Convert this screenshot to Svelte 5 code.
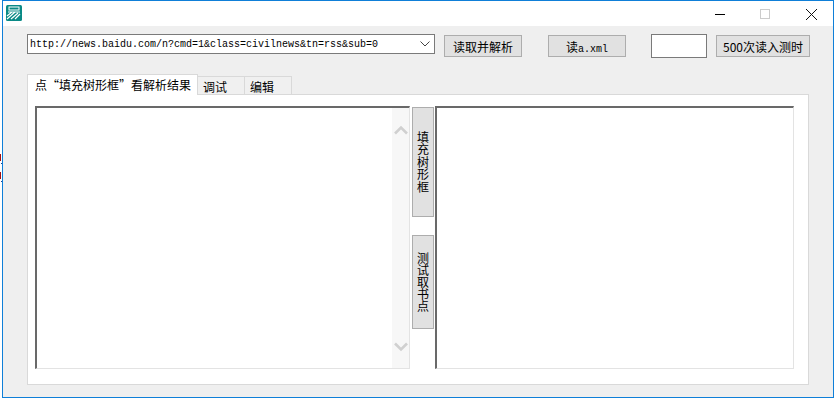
<script>
  let url = 'http://news.baidu.com/n?cmd=1&class=civilnews&tn=rss&sub=0';
  let tabs = ['点“填充树形框”看解析结果', '调试', '编辑'];
</script>

<div class="page">
  <div class="marks">
    <i class="red"></i><i class="dot"></i><i class="red second"></i><i class="dot"></i>
  </div>
  <div class="window">
    <div class="titlebar">
      <svg class="logo" width="16" height="16" viewBox="0 0 16 16">
        <rect width="16" height="16" rx="1.5" fill="#0a8a86" />
        <rect x="3" y="2" width="10" height="3" fill="none" stroke="#fff" stroke-width="1" />
        <path d="M1 11 L6 7 M1 14 L9 7 M5 14 L12 8 M9 14 L14 9 M2 7H14" stroke="#fff" stroke-width="1.2" fill="none" />
      </svg>
      <div class="controls">
        <svg width="103" height="12" viewBox="0 0 103 12">
          <path d="M0 6.5H10" stroke="#000" stroke-width="1" />
          <rect x="45.5" y="1.5" width="9" height="9" fill="none" stroke="#ccc" />
          <path d="M91 1 L102 12 M102 1 L91 12" stroke="#111" stroke-width="1" />
        </svg>
      </div>
    </div>

    <div class="client">
      <div class="toolbar">
        <div class="combo">
          <span class="url">{url}</span>
          <svg width="10" height="6" viewBox="0 0 10 6"><path d="M0.5 0.5 L5 5 L9.5 0.5" fill="none" stroke="#444" /></svg>
        </div>
        <button class="btn b1">读取并解析</button>
        <button class="btn b2">读<span class="mono">a.xml</span></button>
        <div class="edit"></div>
        <button class="btn b3">500次读入测时</button>
      </div>

      <div class="tabs">
        {#each tabs as tab, i}
          <div class="tab" class:active={i === 0}>{tab}</div>
        {/each}
      </div>

      <div class="panel">
        <div class="list left">
          <div class="scroll">
            <svg width="16" height="10" viewBox="0 0 16 10"><path d="M2 8.5 L8 2.5 L14 8.5" fill="none" stroke="#d0d0d0" stroke-width="2.6" /></svg>
            <svg width="16" height="10" viewBox="0 0 16 10"><path d="M2 1.5 L8 7.5 L14 1.5" fill="none" stroke="#d0d0d0" stroke-width="2.6" /></svg>
          </div>
        </div>
        <div class="side">
          <button class="vbtn first"><span>填充树形框</span></button>
          <button class="vbtn second"><span>测试取书点</span></button>
        </div>
        <div class="list right"></div>
      </div>
    </div>
  </div>
</div>

<style>
  :global(body) {
    margin: 0;
    background: #fff;
  }
  .page {
    display: flex;
    width: 837px;
    height: 400px;
    position: relative;
    font-family: "Noto Sans CJK SC", "Liberation Sans", sans-serif;
    font-size: 12px;
    color: #000;
  }
  .marks {
    position: absolute;
    left: 0;
    top: 154px;
    width: 2px;
  }
  .marks i {
    display: block;
  }
  .marks .red {
    width: 1px;
    height: 7px;
    background: #a01010;
  }
  .marks .dot {
    width: 1px;
    height: 1px;
    margin: 2px 0 0 1px;
    background: #1a3f90;
  }
  .marks .second {
    margin-top: 8px;
  }
  .window {
    margin-left: 2px;
    width: 832px;
    height: 398px;
    box-sizing: border-box;
    border: 1px solid #0f7fd8;
    display: flex;
    flex-direction: column;
    background: #efefef;
  }
  .titlebar {
    height: 25px;
    background: #fff;
    display: flex;
    justify-content: space-between;
    flex: none;
  }
  .logo {
    margin: 4px 0 0 3px;
  }
  .controls {
    margin: 7px 15px 0 0;
    line-height: 0;
  }
  .client {
    flex: 1;
    padding: 8px 24px 0 24px;
    display: flex;
    flex-direction: column;
  }
  .toolbar {
    display: flex;
    align-items: flex-start;
    height: 24px;
    width: 784px;
    flex: none;
  }
  .combo {
    width: 408px;
    height: 20px;
    box-sizing: border-box;
    border: 1px solid #7a7a7a;
    background: #fff;
    display: flex;
    align-items: center;
    justify-content: space-between;
    padding: 0 4px 0 2px;
  }
  .url, .mono {
    font-family: "Liberation Mono", monospace;
    font-size: 10px;
  }
  .btn {
    height: 22px;
    margin-top: 1px;
    padding: 0;
    box-sizing: border-box;
    border: 1px solid #adadad;
    background: #e1e1e1;
    font: inherit;
    color: #000;
  }
  .b1 {
    width: 78px;
    margin-left: 9px;
  }
  .b2 {
    width: 78px;
    margin-left: 26px;
  }
  .b3 {
    width: 94px;
    margin-left: 9px;
  }
  .edit {
    width: 56px;
    height: 24px;
    margin-left: 25px;
    box-sizing: border-box;
    border: 1px solid #7a7a7a;
    background: #fff;
  }
  .tabs {
    display: flex;
    align-items: flex-end;
    height: 21px;
    margin-top: 15px;
    position: relative;
    z-index: 1;
    flex: none;
  }
  .tab {
    width: 47px;
    height: 18px;
    box-sizing: border-box;
    border: 1px solid #d9d9d9;
    border-left: none;
    border-bottom: none;
    background: #f0f0f0;
    padding-left: 5px;
    line-height: 19px;
  }
  .tab.active {
    width: 171px;
    height: 21px;
    border-left: 1px solid #d9d9d9;
    background: #fff;
    margin-bottom: -1px;
    padding-left: 7px;
    line-height: 20px;
  }
  .panel {
    width: 782px;
    height: 291px;
    box-sizing: border-box;
    border: 1px solid #d9d9d9;
    background: #fff;
    padding: 11px 14px 15px 7px;
    display: flex;
    flex: none;
  }
  .list {
    box-sizing: border-box;
    height: 263px;
    background: #fff;
    border-style: solid;
    border-color: #696969 #e3e3e3 #e3e3e3 #696969;
    border-width: 2px 1px 1px 2px;
  }
  .left {
    width: 375px;
    display: flex;
    justify-content: flex-end;
  }
  .right {
    width: 359px;
  }
  .scroll {
    width: 17px;
    background: #f7f7f7;
    display: flex;
    flex-direction: column;
    align-items: center;
    justify-content: space-between;
    padding: 17px 0 16px;
    box-sizing: border-box;
  }
  .side {
    width: 25px;
    padding-left: 2px;
    box-sizing: border-box;
    display: flex;
    flex-direction: column;
  }
  .vbtn {
    width: 22px;
    box-sizing: border-box;
    border: 1px solid #adadad;
    background: #e1e1e1;
    padding: 0;
    font: inherit;
    color: #000;
    display: flex;
    align-items: center;
    justify-content: center;
  }
  .vbtn span {
    width: 12px;
    line-height: 12.5px;
    word-break: break-all;
  }
  .vbtn.first {
    height: 110px;
    margin-top: 1px;
  }
  .vbtn.second {
    height: 94px;
    margin-top: 18px;
  }
  .vbtn.second span {
    line-height: 12px;
  }
</style>
